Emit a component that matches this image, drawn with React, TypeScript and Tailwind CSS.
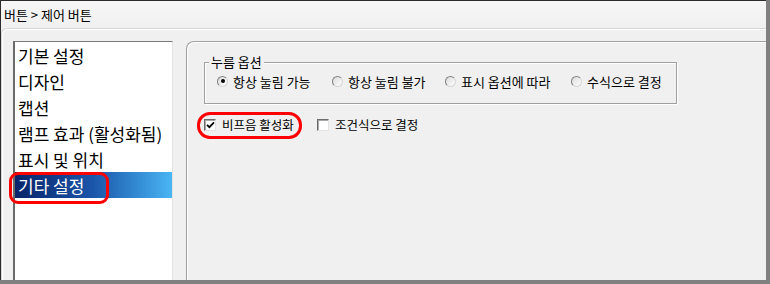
const FONT = "font-['Noto_Sans_CJK_KR','Noto_Sans',sans-serif]";

const menuItems = ["기본 설정", "디자인", "캡션", "램프 효과 (활성화됨)", "표시 및 위치", "기타 설정"];

const radios = [
  { label: "항상 눌림 가능", width: "w-[115px]", checked: true },
  { label: "항상 눌림 불가", width: "w-[113px]", checked: false },
  { label: "표시 옵션에 따라", width: "w-[126px]", checked: false },
  { label: "수식으로 결정", width: "", checked: false },
];

function Radio({ checked }: { checked: boolean }) {
  return (
    <span className="w-[11px] h-[11px] shrink-0 rounded-full border border-t-[#7f7f7f] border-l-[#7f7f7f] border-r-[#d6d6d6] border-b-[#d6d6d6] bg-linear-to-br from-[#dcdcdc] to-[#ffffff] flex items-center justify-center">
      {checked && <span className="w-[4px] h-[4px] rounded-full bg-black" />}
    </span>
  );
}

function Checkbox({ checked }: { checked: boolean }) {
  return (
    <span className="w-[12px] h-[12px] shrink-0 border border-t-[#6b6b6b] border-l-[#6b6b6b] border-r-[#e3e3e3] border-b-[#e3e3e3] bg-white shadow-[inset_1px_1px_0_#a8a8a8] flex items-center justify-center">
      {checked && (
        <svg width="9" height="8" viewBox="0 0 9 8">
          <path d="M1 3.8 L3.4 6.2 L8 1.4" fill="none" stroke="#000" strokeWidth="1.7" />
        </svg>
      )}
    </span>
  );
}

export default function App() {
  return (
    <div className={`w-[770px] h-[284px] bg-[#808080] overflow-hidden text-black ${FONT}`}>
      <div className="w-[766px] h-[280px] border-t border-l border-[#2b2b2b] bg-[#f0f0f0] flex flex-col overflow-hidden">
        {/* title */}
        <div className="h-[27px] shrink-0 flex items-center pl-[3px] text-[13px] leading-none bg-linear-to-b from-[#f6f6f6] to-[#f0f0f0]">
          버튼 &gt; 제어 버튼
        </div>

        <div className="flex-1 min-h-0 flex gap-[13px] pt-[12px] pl-[11px] border-t border-l border-[#d6d6d6] rounded-tl-[6px] shadow-[inset_1px_1px_0_#ffffff]">
          {/* menu list */}
          <div className="relative w-[160px] shrink-0 bg-white border-t border-l-2 border-r border-t-[#7a7a7a] border-l-[#6a6a6a] border-r-[#e3e3e3]">
            {menuItems.map((item, i) => {
              const selected = i === menuItems.length - 1;
              return (
                <div
                  key={item}
                  className={`h-[26px] flex items-center pl-[3px] text-[17px] leading-none whitespace-nowrap ${
                    selected ? "bg-linear-to-r from-[#0a246a] via-[#1c56aa] to-[#4ab6f4] text-white" : ""
                  }`}
                >
                  {item}
                </div>
              );
            })}
            <div className="absolute left-[-6px] top-[130px] w-[100px] h-[32px] border-[3px] border-[#ff0000] rounded-[9px]" />
          </div>

          {/* options panel */}
          <div className="flex-1 pt-[20px] pl-[17px] border-t border-l border-[#a0a0a0] rounded-tl-[8px] shadow-[inset_1px_1px_0_#ffffff]">
            <div className="relative w-[473px] h-[42px] border border-[#a0a0a0] shadow-[inset_1px_1px_0_#ffffff,1px_1px_0_#ffffff] pt-[11px] pl-[12px]">
              <span className="absolute left-[4px] top-[-9px] px-[2px] bg-[#f0f0f0] text-[13px] leading-[16px]">누름 옵션</span>
              <div className="flex items-center h-[14px]">
                {radios.map((r) => (
                  <div key={r.label} className={`flex items-center gap-[5px] ${r.width}`}>
                    <Radio checked={r.checked} />
                    <span className="text-[13px] leading-none whitespace-nowrap">{r.label}</span>
                  </div>
                ))}
              </div>
            </div>

            <div className="flex items-center h-[14px] mt-[14px]">
              <div className="relative flex items-center gap-[6px] w-[113px]">
                <Checkbox checked />
                <span className="text-[12.5px] leading-none whitespace-nowrap">비프음 활성화</span>
                <div className="absolute left-[-7px] top-[-7px] w-[105px] h-[27px] border-[3px] border-[#ff0000] rounded-[13px]" />
              </div>
              <div className="flex items-center gap-[6px]">
                <Checkbox checked={false} />
                <span className="text-[12.5px] leading-none whitespace-nowrap">조건식으로 결정</span>
              </div>
            </div>
          </div>
        </div>
      </div>
    </div>
  );
}
